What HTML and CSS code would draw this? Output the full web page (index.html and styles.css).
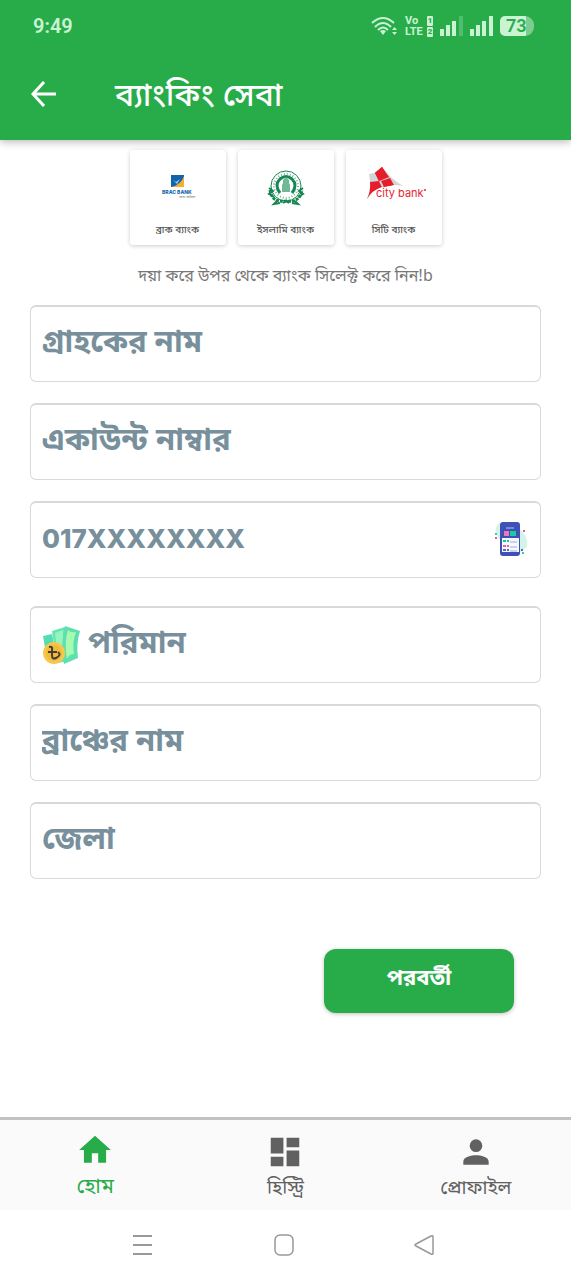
FILE: index.html
```html
<!DOCTYPE html>
<html lang="bn">
<head>
<meta charset="utf-8">
<meta name="viewport" content="width=device-width, initial-scale=1">
<title>ব্যাংকিং সেবা</title>
<link rel="stylesheet" href="styles.css">
</head>
<body>
<div class="screen">
  <header class="top">
    <div class="status">
      <span class="clock">9:49</span>
      <div class="indicators">
        <svg width="27" height="20" viewBox="0 0 27 20" fill="none" stroke="#c9f3d3" stroke-width="2"><path d="M1 7Q12-3 23 7M4 11Q12 3 20 11M7 14Q12 9 17 14"/><path d="M9 15q3-2 6 0l-3 4zM21 14l2.500-3 2.500 3zM21 16l2.500 3 2.500-3z" fill="#c9f3d3" stroke="none"/></svg>
        <div class="volte"><span>Vo <b>1</b></span><span>LTE<b>2</b></span></div>
        <svg width="23" height="20" viewBox="0 0 23 20" fill="#c9f3d3"><path d="M0 13h4v7H0zM6 9h4v11H6zM12 5h4v15h-4z"/><path d="M19 0h4v20h-4z" opacity=".25"/></svg>
        <svg width="23" height="20" viewBox="0 0 23 20" fill="#c9f3d3"><path d="M0 13h4v7H0zM6 9h4v11H6zM12 5h4v15h-4zM19 0h4v20h-4z"/></svg>
        <div class="battery">73</div>
      </div>
    </div>
    <div class="bar">
      <button class="back" aria-label="Back"><svg width="26" height="26" viewBox="0 0 26 26" fill="none" stroke="#fff" stroke-width="3"><path d="M25 13H2M13 1 2 13l11 12"/></svg></button>
      <h1 class="title">ব্যাংকিং সেবা</h1>
    </div>
  </header>
  <main class="content">
    <div class="banks">
      <button class="bank">
        <svg class="logo" viewBox="0 0 80 60"><path d="M33 15h13v12H33z" fill="#1262ad"/><path d="M33 27q10-2 13-11v11z" fill="#f4ad35"/><path d="m35 20 3 2 4-3-3 5z" fill="#9bd0f5"/><text x="24" y="34" class="brac">BRAC BANK</text><text x="41" y="38" class="tagline">আস্থা অবিচল</text></svg>
        <span>ব্রাক ব্যাংক</span>
      </button>
      <button class="bank">
        <svg class="logo" viewBox="0 0 80 60"><g fill="none" stroke="#178653"><circle cx="40" cy="26" r="15" stroke-width="1"/><circle cx="40" cy="26" r="12" stroke-width="2" stroke-dasharray="1 2" opacity=".6"/><path d="M34 33q-6-8 0-14 6-5 12 0 6 6 0 14" stroke-width="3"/><path d="M24 30q2 13 16 11 14 2 16-11" stroke-width="3" stroke-dasharray="3 1"/><path d="m23 28 4 3-4 3 5 3M57 28l-4 3 4 3-5 3M31 41l-3 3 6-1M49 41l3 3-6-1M37 43l3-2 3 2" stroke-width="2"/></g><path d="M36 32v-7l1-2v-3l3-3 3 3v3l1 2v7z" fill="#70b898"/></svg>
        <span>ইসলামি ব্যাংক</span>
      </button>
      <button class="bank">
        <svg class="logo" viewBox="0 0 80 60"><path d="M28 7 20 13 15 14Q18 27 13 39 19 29 30 26q10-2 19 0-12-7-21-19" fill="#d2d5d8"/><path d="M28 7 21 13l4 8 9-4zM25 21l-9 1q1 9-3 17 5-9 15-12zM34 17l-9 4 4 6 10-2z" fill="#e61e2b"/><path d="M34 17l-9 4 3 6 10-3z" fill="#d2d5d8"/><path d="M28 7 21 13l4 8 10-4zM27 21l9-3 4 7-10 2z" fill="#e61e2b"/><text x="22" y="37" class="city">city bank</text><circle cx="71" cy="30" r="1" fill="#b13b48"/></svg>
        <span>সিটি ব্যাংক</span>
      </button>
    </div>
    <p class="hint">দয়া করে উপর থেকে ব্যাংক সিলেক্ট করে নিন!b</p>
    <form class="form">
      <label class="field"><input aria-label="গ্রাহকের নাম" placeholder="গ্রাহকের নাম"></label>
      <label class="field"><input aria-label="একাউন্ট নাম্বার" placeholder="একাউন্ট নাম্বার"></label>
      <label class="field phone"><input type="tel" aria-label="Phone" placeholder="017XXXXXXXX">
        <svg width="36" height="40" viewBox="0 0 36 40"><path d="M5 4q12-6 20 4 11 8 9 18-5 9-18 7-4-9-9-13-8-8-2-16" fill="#d5f3e8"/><rect x="7" y="2" width="20" height="34" rx="3" fill="#3f51b5"/><path d="M9 18h17v14H9z" fill="#f5f8ff"/><path d="M13 8h8" stroke="#aec5ff"/><path d="M11 11h5v5h-5z" fill="#ef75bd"/><path d="M17 11h6v5h-6z" fill="#1bcaa4"/><path d="M10 21h3m1 0h2" stroke="#18c998" stroke-width="2"/><path d="M10 26h3m1 0h2" stroke="#ed608f" stroke-width="2"/><path d="M10 30h3m1 0h2" stroke="#5865c9" stroke-width="2"/><path d="M17 22h7M17 27h7M17 31h7" stroke="#a3afdc"/><path d="M30 11h2M2 18h2" stroke="#df627d" stroke-width="2"/><path d="M2 14h2M29 33h2" stroke="#35cbb7" stroke-width="2"/><path d="M28 30h2" stroke="#4e65cc" stroke-width="2"/></svg>
      </label>
      <label class="field amount">
        <svg width="38" height="40" viewBox="0 0 38 40"><path d="m1 11 9-2 4 20-9 5z" fill="#53ddb0"/><path d="m10 6 13-4 4 34-12 2z" fill="#65e5b4"/><path d="m13 8 8-3v28l-5 2z" fill="#96f5bd"/><path d="m23 1 15 5q-4 13-2 27l-14 6q-4-18 1-38" fill="#5edfb1"/><path d="M26 5q2 3 8 2-4 10-2 22-5 0-7 5-3-17 1-29" fill="#a7fbae"/><circle cx="12" cy="28" r="11" fill="#f7c64c"/><circle cx="12" cy="28" r="8" fill="#efbb3d"/><path d="M7 22q4-1 3 3v5q0 5 4 3 6-3 2-6M6 27h9" fill="none" stroke="#473b35" stroke-width="2"/></svg>
        <input inputmode="decimal" aria-label="পরিমান" placeholder="পরিমান"></label>
      <label class="field"><input aria-label="ব্রাঞ্চের নাম" placeholder="ব্রাঞ্চের নাম"></label>
      <label class="field"><input aria-label="জেলা" placeholder="জেলা"></label>
      <button class="next" type="button">পরবর্তী</button>
    </form>
  </main>
  <nav class="tabs">
    <a class="tab active" href="#"><svg width="38" height="38" viewBox="0 0 24 24" fill="currentColor"><path d="M10 20v-6h4v6h5v-8h3L12 3 2 12h3v8z"/></svg><span>হোম</span></a>
    <a class="tab" href="#"><svg width="38" height="38" viewBox="0 0 24 24" fill="currentColor"><path d="M3 13h8V3H3zm0 8h8v-6H3zm10 0h8V11h-8zm0-18v6h8V3z"/></svg><span>হিস্ট্রি</span></a>
    <a class="tab" href="#"><svg width="38" height="38" viewBox="0 0 24 24" fill="currentColor"><path d="M12 12a4 4 0 1 0 0-8 4 4 0 0 0 0 8m0 2c-3 0-8 1-8 4v2h16v-2c0-3-5-4-8-4"/></svg><span>প্রোফাইল</span></a>
  </nav>
  <div class="system">
    <button aria-label="Recent"><svg width="20" height="22" viewBox="0 0 20 22" fill="none" stroke="#999" stroke-width="2"><path d="M0 2h19M0 11h19M0 20h19"/></svg></button>
    <button aria-label="Home"><svg width="20" height="22" viewBox="0 0 20 22" fill="none" stroke="#999" stroke-width="1.500"><rect x="1" y="1" width="18" height="20" rx="5"/></svg></button>
    <button aria-label="Back"><svg width="20" height="22" viewBox="0 0 20 22" fill="none" stroke="#999" stroke-width="1.500"><path d="M17 2Q19 1 19 3v16q0 2-2 1L2 12q-2-1 0-2z"/></svg></button>
  </div>
</div>
</body>
</html>
```

FILE: styles.css
```css
* { box-sizing: border-box; }
body { margin: 0; background: #fff; font-family: "Noto Sans Bengali", "Noto Sans", sans-serif; }
button { border: 0; padding: 0; background: none; font: inherit; color: inherit; }
svg { display: block; flex: none; }
.screen { min-height: 100vh; display: flex; flex-direction: column; }
.top { background: #28ac4a; color: #fff; height: 140px; box-shadow: 0 2px 8px rgba(0,0,0,.28); }
.status { display: flex; justify-content: space-between; align-items: center; padding: 14px 37px 0 33px; height: 38px; color: #c9f3d3; }
.clock { font: 600 20px/24px Roboto, sans-serif; }
.indicators { display: flex; align-items: center; gap: 7px; }
.volte { display: flex; flex-direction: column; gap: 1px; font: 700 11px/10px Roboto, sans-serif; width: 28px; }
.volte span { display: flex; justify-content: space-between; }
.volte b { background: #c9f3d3; color: #28ac4a; font-size: 8px; line-height: 10px; width: 6px; height: 10px; text-align: center; border-radius: 1px; }
.battery { font: 600 18px/20px Roboto, sans-serif; width: 34px; padding-left: 6px; color: #28ac4a; border-radius: 5px 9px 9px 5px; background: linear-gradient(90deg, #c9f3d3 76%, #7ccd8f 76%); }
.bar { display: flex; align-items: center; gap: 58px; padding: 0 31px; height: 112px; }
.title { margin: 0; padding-top: 8px; font-size: 32px; line-height: 40px; font-weight: 500; }
.content { flex: 1; padding: 10px 30px 0; }
.banks { display: flex; justify-content: center; gap: 12px; }
.bank { width: 96px; height: 95px; padding: 10px 8px 6px; background: #fff; border-radius: 3px; box-shadow: 0 1px 4px rgba(0,0,0,.2); display: flex; flex-direction: column; align-items: center; justify-content: space-between; font-size: 10px; line-height: 16px; font-weight: 500; color: #555; }
.logo { width: 80px; height: 60px; }
.brac { font: 800 5px Inter, sans-serif; fill: #1668ad; }
.tagline { font-size: 3px; fill: #888; }
.city { font: 11px Inter, sans-serif; fill: #e61e35; }
.hint { margin: 20px 0 16px; text-align: center; font-size: 16px; line-height: 24px; color: #777; }
.form { display: flex; flex-direction: column; gap: 21px; }
.field { display: flex; align-items: center; gap: 8px; height: 77px; padding: 0 11px; border: 1px solid #d9d9d9; border-top: 2px solid #d9d9d9; border-radius: 6px; background: #fff; }
.field input { flex: 1; min-width: 0; height: 70px; padding: 0; border: 0; outline: 0; background: none; font: 700 31px/68px "Noto Sans Bengali", "Noto Sans", sans-serif; color: #78909c; }
.field input::placeholder { color: #78909c; opacity: 1; line-height: 68px; overflow: visible; }
.field.phone input { padding-bottom: 4px; font: 800 26px/60px Inter, sans-serif; }
.field.phone input::placeholder { line-height: 60px; }
.amount { margin-top: 7px; }
.next { align-self: flex-end; width: 190px; height: 64px; margin: 49px 27px 0 0; padding-bottom: 4px; border-radius: 12px; background: #28ac4a; color: #fff; font-weight: 700; font-size: 22px; box-shadow: 0 1px 4px rgba(0,0,0,.25); }
.tabs { display: grid; grid-template-columns: repeat(3, 1fr); height: 93px; padding-top: 13px; border-top: 3px solid #c2c2c2; background: #fafafa; }
.tab { display: flex; flex-direction: column; align-items: center; text-decoration: none; color: #616161; font-size: 19px; line-height: 38px; }
.active { color: #28ac4a; font-size: 21px; }
.active svg { margin-top: -2px; }
.system { display: flex; justify-content: space-between; align-items: center; height: 70px; padding: 0 137px 0 133px; }
```
